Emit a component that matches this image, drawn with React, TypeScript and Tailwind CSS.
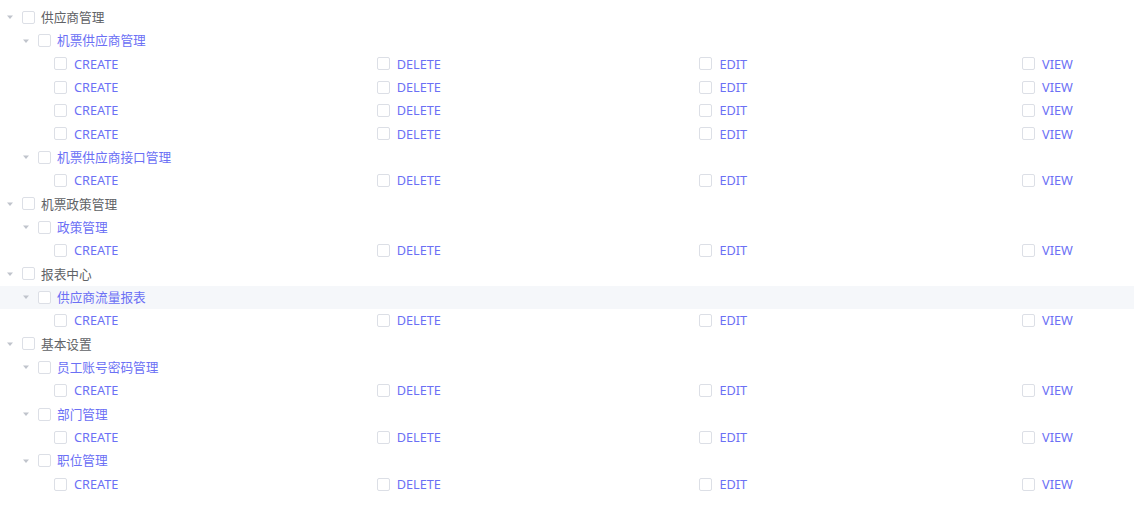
import React from "react";

type Node = { label: string; children?: Node[]; leaves?: number; active?: boolean };

const tree: Node[] = [
  {
    label: "供应商管理",
    children: [
      { label: "机票供应商管理", leaves: 4 },
      { label: "机票供应商接口管理", leaves: 1 },
    ],
  },
  { label: "机票政策管理", children: [{ label: "政策管理", leaves: 1 }] },
  { label: "报表中心", children: [{ label: "供应商流量报表", leaves: 1, active: true }] },
  {
    label: "基本设置",
    children: [
      { label: "员工账号密码管理", leaves: 1 },
      { label: "部门管理", leaves: 1 },
      { label: "职位管理", leaves: 1 },
    ],
  },
];

const actions = ["CREATE", "DELETE", "EDIT", "VIEW"];

function Box() {
  return <span className="inline-block w-[13px] h-[13px] shrink-0 rounded-[2px] border border-[#dcdfe6] bg-white" />;
}

function Caret() {
  return (
    <span className="w-[20px] flex justify-center shrink-0">
      <svg width="8" height="6" viewBox="0 0 8 6">
        <path d="M1 1.5 L7 1.5 L4 5 Z" fill="#c0c4cc" />
      </svg>
    </span>
  );
}

function Row({ level, label, root, active }: { level: number; label: string; root?: boolean; active?: boolean }) {
  return (
    <div
      className={`flex items-center h-[23.35px] ${active ? "bg-[#f5f7fa]" : ""}`}
      style={{ paddingLeft: level * 16 }}
    >
      <Caret />
      <span className="ml-[2px] flex">
        <Box />
      </span>
      <span className={`ml-[6px] ${root ? "text-[#606266]" : "text-[#6b70f5]"}`}>{label}</span>
    </div>
  );
}

function LeafRow() {
  return (
    <div className="flex items-center h-[23.35px] pl-[54px]">
      {actions.map((a) => (
        <div key={a} className="flex items-center w-[322.7px] shrink-0">
          <Box />
          <span className="ml-[7px] text-[#6b70f5]">{a}</span>
        </div>
      ))}
    </div>
  );
}

export default function App() {
  return (
    <div
      className="w-[1134px] h-[522px] overflow-hidden bg-white pt-[5.5px] text-[12.7px] leading-none"
      style={{ fontFamily: '"Noto Sans", "Noto Sans CJK SC", sans-serif' }}
    >
      {tree.map((n) => (
        <div key={n.label}>
          <Row level={0} label={n.label} root />
          {n.children?.map((c) => (
            <div key={c.label}>
              <Row level={1} label={c.label} active={c.active} />
              {Array.from({ length: c.leaves ?? 0 }).map((_, i) => (
                <LeafRow key={i} />
              ))}
            </div>
          ))}
        </div>
      ))}
    </div>
  );
}
